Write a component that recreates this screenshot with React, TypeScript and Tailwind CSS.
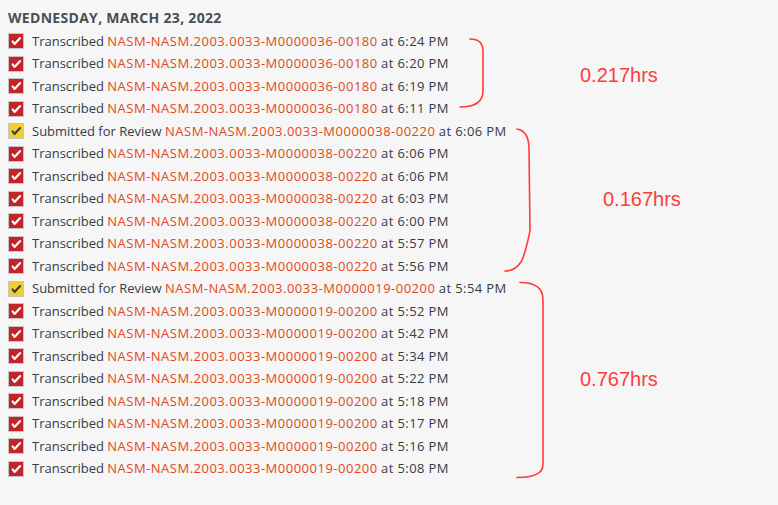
import type { ReactNode } from "react";

type Entry = { kind: "t" | "r"; id: string; time: string };

const A = "NASM-NASM.2003.0033-M0000036-00180";
const B = "NASM-NASM.2003.0033-M0000038-00220";
const C = "NASM-NASM.2003.0033-M0000019-00200";

const GROUPS: {
  entries: Entry[];
  bracket: string;
  label: string;
  labelPad: string;
}[] = [
  {
    entries: [
      { kind: "t", id: A, time: "6:24 PM" },
      { kind: "t", id: A, time: "6:20 PM" },
      { kind: "t", id: A, time: "6:19 PM" },
      { kind: "t", id: A, time: "6:11 PM" },
    ],
    bracket: "M12 9 Q25 9 25 21 L25 61 Q25 77 2 77",
    label: "0.217hrs",
    labelPad: "pl-[122px]",
  },
  {
    entries: [
      { kind: "r", id: B, time: "6:06 PM" },
      { kind: "t", id: B, time: "6:06 PM" },
      { kind: "t", id: B, time: "6:06 PM" },
      { kind: "t", id: B, time: "6:03 PM" },
      { kind: "t", id: B, time: "6:00 PM" },
      { kind: "t", id: B, time: "5:57 PM" },
      { kind: "t", id: B, time: "5:56 PM" },
    ],
    bracket: "M59 9 Q71 11 71 29 L72 111 Q67 135 63 142 Q57 151 47 151",
    label: "0.167hrs",
    labelPad: "pl-[145px]",
  },
  {
    entries: [
      { kind: "r", id: C, time: "5:54 PM" },
      { kind: "t", id: C, time: "5:52 PM" },
      { kind: "t", id: C, time: "5:42 PM" },
      { kind: "t", id: C, time: "5:34 PM" },
      { kind: "t", id: C, time: "5:22 PM" },
      { kind: "t", id: C, time: "5:18 PM" },
      { kind: "t", id: C, time: "5:17 PM" },
      { kind: "t", id: C, time: "5:16 PM" },
      { kind: "t", id: C, time: "5:08 PM" },
    ],
    bracket: "M62 4.5 Q85 4.5 85 21.5 L85 186.5 Q85 199.5 59 199.5",
    label: "0.767hrs",
    labelPad: "pl-[122px]",
  },
];

function CheckBox({ review }: { review: boolean }) {
  return (
    <span
      className={`w-4 h-4 shrink-0 flex items-center justify-center border border-[#c4c4c4] ${
        review ? "bg-[#f3cf2e]" : "bg-[#c3242a]"
      }`}
    >
      <svg viewBox="0 0 16 16" className="w-3 h-3">
        <path
          d="M3.5 8.5 L6 12 L13.5 4"
          fill="none"
          stroke={review ? "#3a3a3a" : "#ffffff"}
          strokeWidth="2.8"
          strokeLinecap="round"
          strokeLinejoin="round"
        />
      </svg>
    </span>
  );
}

function Row({ e }: { e: Entry }) {
  return (
    <li className="flex items-center gap-2 h-[22.5px] text-[13px] whitespace-nowrap">
      <CheckBox review={e.kind === "r"} />
      <span>
        {e.kind === "r" ? "Submitted for Review" : "Transcribed"}{" "}
        <span className="text-[#e0481c] tracking-[0.5px]">{e.id}</span>{" "}
        <span className="tracking-[0.4px]">at {e.time}</span>
      </span>
    </li>
  );
}

function Group({
  entries,
  bracket,
  children,
  labelPad,
}: {
  entries: Entry[];
  bracket: string;
  children: ReactNode;
  labelPad: string;
}) {
  return (
    <div className="flex">
      <ul className="w-[450px] shrink-0">
        {entries.map((e, i) => (
          <Row key={i} e={e} />
        ))}
      </ul>
      <div className={`relative flex-1 flex items-center ${labelPad}`}>
        <svg className="absolute inset-0 w-full h-full overflow-visible pointer-events-none">
          <path d={bracket} fill="none" stroke="#ff3b3b" strokeWidth="1.6" strokeLinecap="round" />
        </svg>
        <span className="text-[20px] leading-none text-[#ff3b3b] font-['Liberation_Sans',Arial,sans-serif]">
          {children}
        </span>
      </div>
    </div>
  );
}

export default function App() {
  return (
    <div className="w-[778px] h-[505px] bg-[#f6f6f6] font-['Open_Sans',sans-serif] text-[#353c45] overflow-hidden">
      <div className="pt-[9px] pl-2">
        <h2 className="text-[14px] font-bold tracking-[0.3px] text-[#4a4f55] leading-[18px] mb-[3px]">
          WEDNESDAY, MARCH 23, 2022
        </h2>
        {GROUPS.map((g, i) => (
          <Group key={i} entries={g.entries} bracket={g.bracket} labelPad={g.labelPad}>
            {g.label}
          </Group>
        ))}
      </div>
    </div>
  );
}
